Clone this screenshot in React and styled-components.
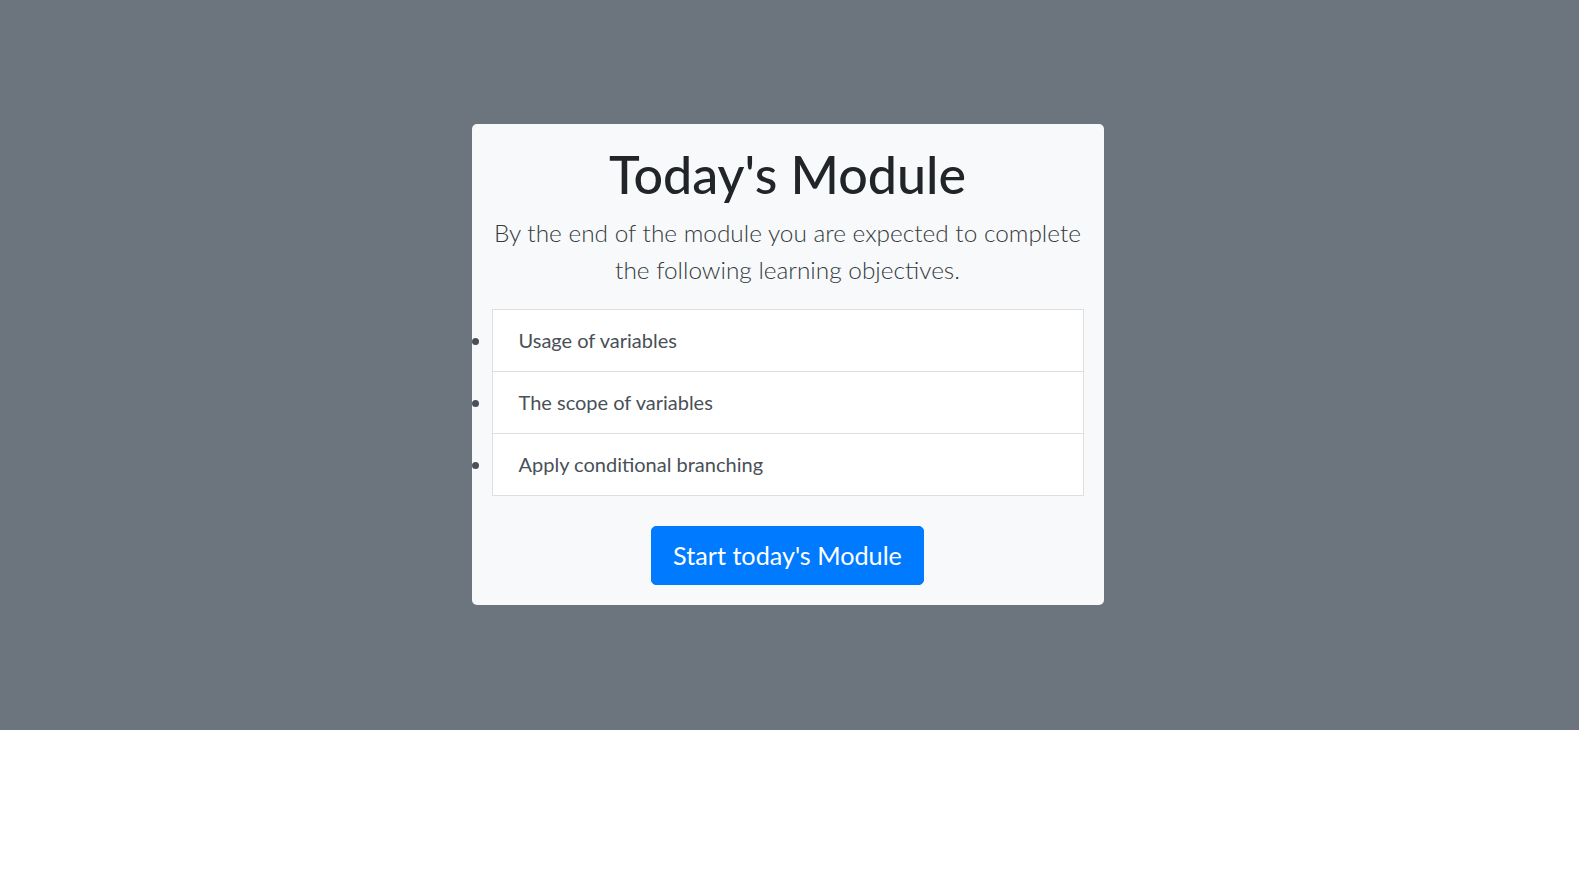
import styled, { createGlobalStyle } from 'styled-components';

const GlobalStyle = createGlobalStyle`
  body {
    margin: 0;
    background: #fff;
    font-family: Lato, "Noto Sans", "Liberation Sans", sans-serif;
    color: #212529;
  }
`;

const Hero = styled.section`
  display: flex;
  align-items: center;
  justify-content: center;
  height: 730px;
  box-sizing: border-box;
  padding: 0 4px 2px 0;
  background: #6c757d;
`;

const Card = styled.div`
  width: 632px;
  box-sizing: border-box;
  padding: 20px;
  background: #f8f9fa;
  border-radius: 5px;
  text-align: center;
`;

const Title = styled.h1`
  margin: 0 0 10px;
  font-size: 52px;
  font-weight: 500;
  line-height: 60px;
  color: #212529;
`;

const Lead = styled.p`
  margin: 0 0 21px;
  font-size: 24.4px;
  font-weight: 300;
  line-height: 37px;
  color: #343a40;
`;

const ObjectiveList = styled.ul`
  margin: 0 0 30px;
  padding: 0;
  list-style: disc;
  text-align: left;
  color: #495057;
`;

const ObjectiveItem = styled.li`
  display: list-item;
  padding: 15px 26px 16px;
  margin-bottom: -1px;
  font-size: 20px;
  line-height: 30px;
  background: #fff;
  border: 1px solid rgba(0, 0, 0, 0.125);

  &:last-child {
    margin-bottom: 0;
  }
`;

const StartButton = styled.button`
  padding: 10px 21px;
  font-family: inherit;
  font-size: 25.2px;
  line-height: 37px;
  color: #fff;
  background: #007bff;
  border: 1px solid #007bff;
  border-radius: 5px;
  cursor: pointer;
`;

const objectives = [
  'Usage of variables',
  'The scope of variables',
  'Apply conditional branching',
];

export default function App() {
  return (
    <>
      <GlobalStyle />
      <Hero>
        <Card>
          <Title>Today's Module</Title>
          <Lead>
            By the end of the module you are expected to complete the following
            learning objectives.
          </Lead>
          <ObjectiveList>
            {objectives.map(item => (
              <ObjectiveItem key={item}>{item}</ObjectiveItem>
            ))}
          </ObjectiveList>
          <StartButton>Start today's Module</StartButton>
        </Card>
      </Hero>
    </>
  );
}
